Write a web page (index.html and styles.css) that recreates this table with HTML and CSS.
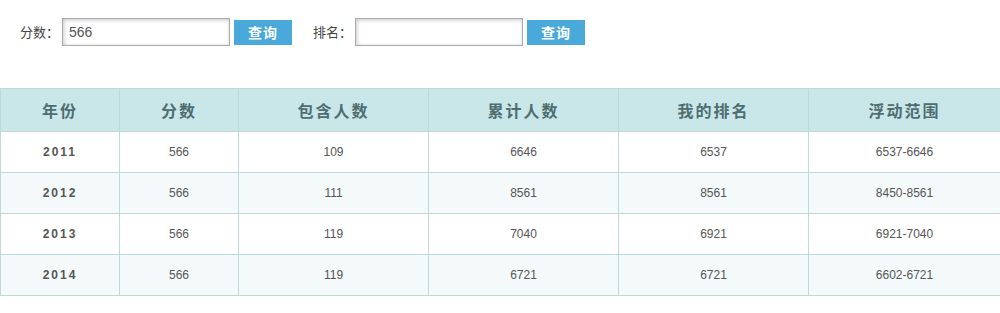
FILE: index.html
```html
<!DOCTYPE html>
<html lang="zh">
<head>
<meta charset="utf-8">
<title>分数排名查询</title>
<link rel="stylesheet" href="styles.css">
</head>
<body>
<div class="search">
  <div class="field">
    <label class="label">分数：</label>
    <input class="input" type="text" value="566">
    <button class="btn">查询</button>
  </div>
  <div class="field">
    <label class="label">排名：</label>
    <input class="input" type="text" value="">
    <button class="btn">查询</button>
  </div>
</div>
<table class="rank">
  <colgroup>
    <col class="c1"><col class="c2"><col class="c3"><col class="c4"><col class="c5"><col class="c6">
  </colgroup>
  <thead>
    <tr><th>年份</th><th>分数</th><th>包含人数</th><th>累计人数</th><th>我的排名</th><th>浮动范围</th></tr>
  </thead>
  <tbody>
    <tr><td class="year">2011</td><td>566</td><td>109</td><td>6646</td><td>6537</td><td>6537-6646</td></tr>
    <tr><td class="year">2012</td><td>566</td><td>111</td><td>8561</td><td>8561</td><td>8450-8561</td></tr>
    <tr><td class="year">2013</td><td>566</td><td>119</td><td>7040</td><td>6921</td><td>6921-7040</td></tr>
    <tr><td class="year">2014</td><td>566</td><td>119</td><td>6721</td><td>6721</td><td>6602-6721</td></tr>
  </tbody>
</table>
</body>
</html>
```

FILE: styles.css
```css
html, body {
  margin: 0;
  padding: 0;
  background: #fff;
  font-family: "Liberation Sans", "Noto Sans CJK SC", sans-serif;
  color: #555;
}
.search {
  display: flex;
  align-items: center;
  padding: 18px 0 0 20px;
  gap: 21px;
  height: 28px;
}
.field {
  display: flex;
  align-items: center;
}
.label {
  display: inline-block;
  width: 42px;
  font-size: 13px;
  color: #444;
  font-family: "Noto Sans CJK SC", sans-serif;
  line-height: 28px;
  white-space: nowrap;
}
.input {
  box-sizing: border-box;
  width: 168px;
  height: 28px;
  margin: 0;
  padding: 0 6px;
  border: 1px solid #aaa;
  box-shadow: inset 1px 1px 4px rgba(0,0,0,0.22);
  font-family: "Liberation Sans", sans-serif;
  font-size: 14px;
  color: #555;
  outline: none;
}
.btn {
  box-sizing: border-box;
  width: 58px;
  height: 25px;
  margin: 0 0 0 4px;
  border: 0;
  padding: 0;
  background: #4aa9db;
  color: #fff;
  font-family: "Noto Sans CJK SC", sans-serif;
  font-weight: bold;
  font-size: 14px;
  letter-spacing: 1px;
}
.rank {
  margin-top: 42px;
  width: 1000px;
  border-collapse: collapse;
  table-layout: fixed;
}
.c1, .c2 { width: 119px; }
.c3, .c4, .c5 { width: 190px; }
.c6 { width: 192px; }
.rank th, .rank td {
  border: 1px solid #bdd9d9;
  text-align: center;
  padding: 0;
}
.rank th {
  background: #c9e7e9;
  height: 42px;
  font-family: "Noto Sans CJK SC", sans-serif;
  font-weight: bold;
  font-size: 16px;
  letter-spacing: 2px;
  color: #4f6d71;
}
.rank td {
  height: 40px;
  font-size: 12px;
  color: #555;
}
.rank tbody tr:nth-child(even) td {
  background: #f4fafa;
}
.rank td.year {
  font-weight: bold;
  letter-spacing: 2px;
  color: #555;
}
```
